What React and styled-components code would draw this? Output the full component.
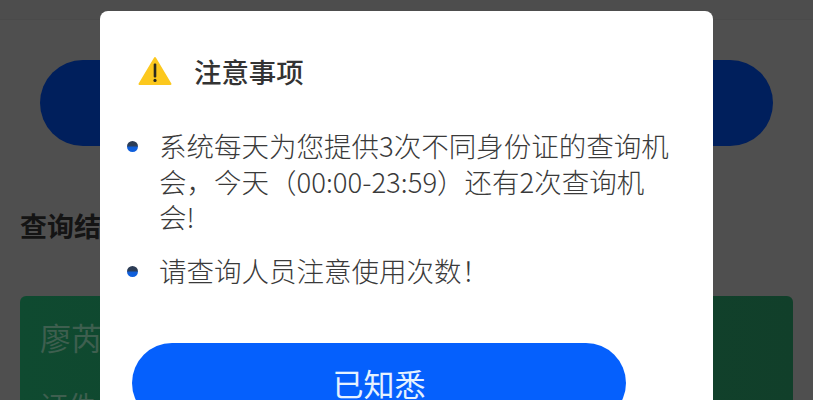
import React from "react";
import styled, { createGlobalStyle } from "styled-components";

const CJK = `"Noto Sans CJK SC", "Roboto", sans-serif`;

const Global = createGlobalStyle`
  html, body { margin: 0; padding: 0; height: 100%; overflow: hidden; background: #4f4f4f; }
  #root { height: 100%; }
`;

const Page = styled.div`
  position: relative;
  width: 813px;
  height: 400px;
  overflow: hidden;
  background: #4f4f4f;
  font-family: ${CJK};
`;

const TopBar = styled.div`
  height: 19px;
  border-bottom: 1px solid #4a4a4a;
  background: #4d4d4d;
`;

const Content = styled.div`
  padding: 40px 20px 0;
  display: flex;
  flex-direction: column;
`;

const QueryButton = styled.div`
  height: 86px;
  margin: 0 20px;
  border-radius: 43px;
  background: #001f5c;
`;

const SectionTitle = styled.h2`
  margin: 62px 0 0;
  font-size: 27px;
  line-height: 36px;
  font-weight: 700;
  color: #141414;
`;

const ResultCard = styled.div`
  margin-top: 52px;
  height: 200px;
  padding: 19px 20px;
  border-radius: 6px;
  background: linear-gradient(90deg, #0f4a30, #113f2a);
`;

const CardName = styled.div`
  font-size: 31px;
  line-height: 44px;
  color: #3e5f4f;
`;

const CardLine = styled.div`
  margin-top: 28px;
  font-size: 28px;
  line-height: 36px;
  color: #3e5f4f;
`;

const Modal = styled.div`
  position: absolute;
  left: 100px;
  top: 11px;
  width: 613px;
  height: 440px;
  box-sizing: border-box;
  padding: 39px 32px 0 32px;
  border-radius: 8px;
  background: #fff;
`;

const ModalHeader = styled.div`
  display: flex;
  align-items: center;
  height: 42px;
  padding-left: 6px;
  gap: 22px;
`;

const ModalTitle = styled.h3`
  margin: 0;
  font-size: 27.4px;
  line-height: 42px;
  font-weight: 500;
  color: #333;
`;

const NoticeList = styled.ul`
  list-style: none;
  margin: 36px 0 0;
  padding: 0;
  display: flex;
  flex-direction: column;
  gap: 18.5px;
`;

const NoticeItem = styled.li`
  display: flex;
  align-items: flex-start;
  gap: 21px;
  font-size: 27.5px;
  font-weight: 300;
  line-height: 35.5px;
  color: #3a3a3a;
`;

const NoticeText = styled.span`
  max-width: 514px;
`;

const Dot = styled.span`
  flex: none;
  width: 11px;
  height: 11px;
  margin: 13px 0 0 -5px;
  border-radius: 50%;
  background: linear-gradient(#2c3c55 40%, #0f5fdc 60%);
`;

const ConfirmButton = styled.button`
  display: block;
  width: 494px;
  height: 80px;
  margin-top: 54px;
  border: 0;
  border-radius: 40px;
  background: #0560fd;
  color: #e6f2ff;
  font-family: inherit;
  font-size: 31px;
  line-height: 80px;
  padding: 0;
`;

const WarningIcon = () => (
  <svg width="34" height="30" viewBox="0 0 34 30" aria-hidden="true">
    <path d="M17 2 L32.5 28 H1.5 Z" fill="#fcc81e" stroke="#fcc81e" strokeWidth="2" strokeLinejoin="round" />
    <rect x="15.7" y="7.5" width="2.6" height="14" rx="1" fill="#2a2a20" />
    <circle cx="17" cy="24.4" r="1.6" fill="#2a2a20" />
  </svg>
);

export default function App() {
  return (
    <Page>
      <Global />
      <TopBar />
      <Content>
        <QueryButton />
        <SectionTitle>查询结果</SectionTitle>
        <ResultCard>
          <CardName>廖芮</CardName>
          <CardLine>证件</CardLine>
        </ResultCard>
      </Content>
      <Modal>
        <ModalHeader>
          <WarningIcon />
          <ModalTitle>注意事项</ModalTitle>
        </ModalHeader>
        <NoticeList>
          <NoticeItem>
            <Dot />
            <NoticeText>系统每天为您提供3次不同身份证的查询机会，今天（00:00-23:59）还有2次查询机会!</NoticeText>
          </NoticeItem>
          <NoticeItem>
            <Dot />
            <NoticeText>请查询人员注意使用次数！</NoticeText>
          </NoticeItem>
        </NoticeList>
        <ConfirmButton>已知悉</ConfirmButton>
      </Modal>
    </Page>
  );
}
